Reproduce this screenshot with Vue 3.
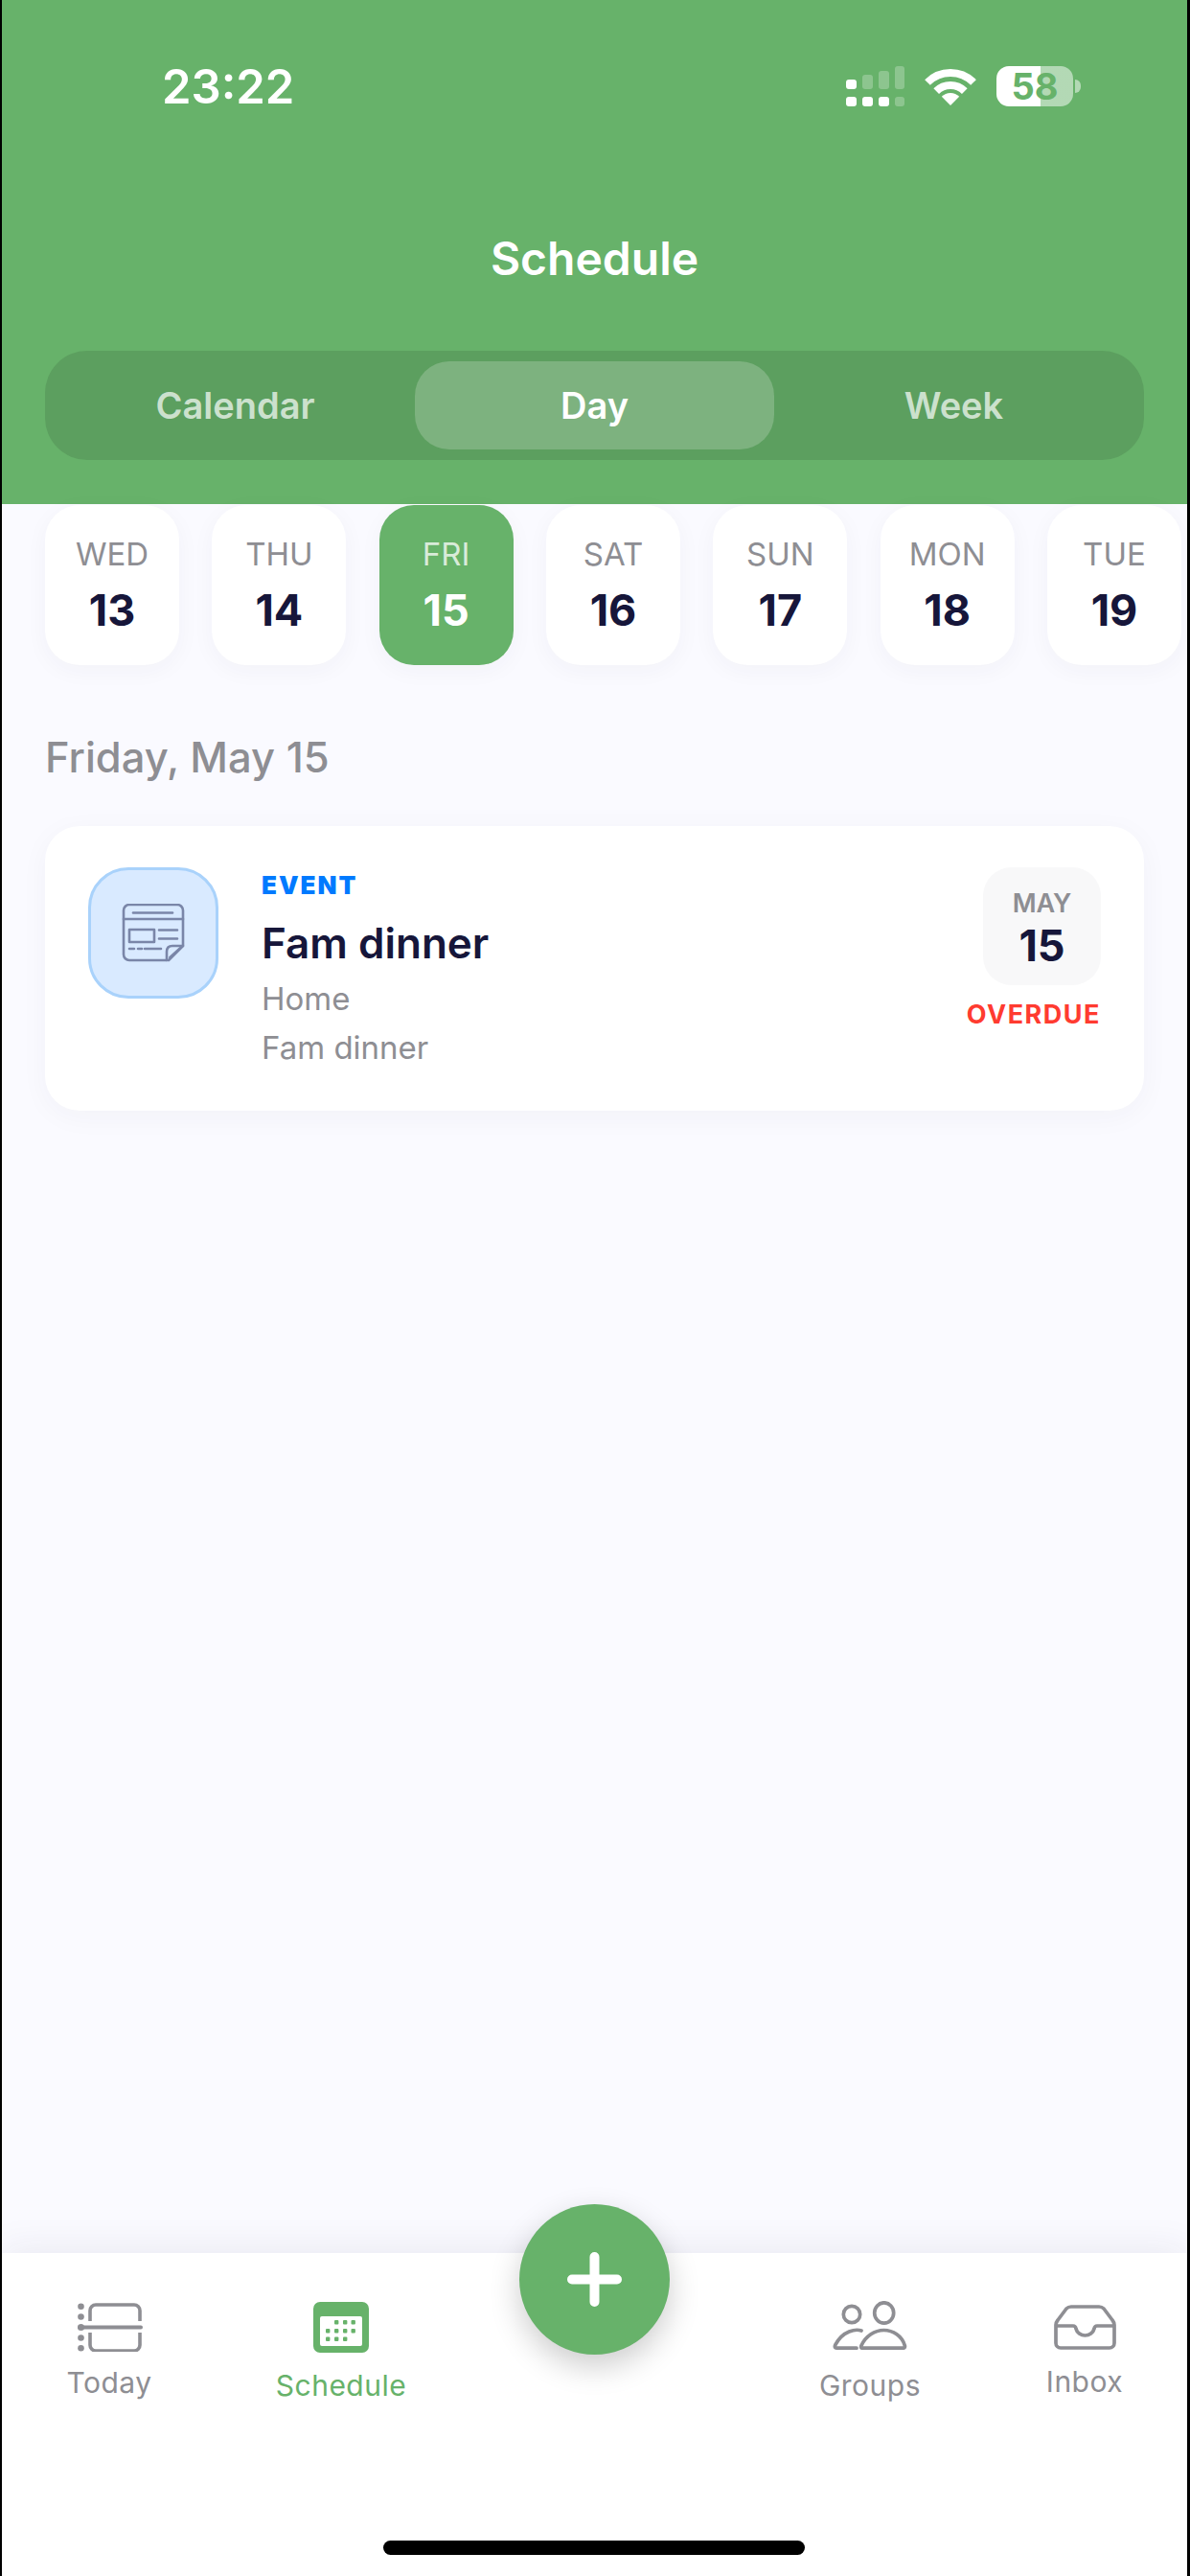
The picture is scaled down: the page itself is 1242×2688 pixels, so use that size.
<template>
  <div class="phone">
    <header class="header">
      <div class="status">
        <span class="time">23:22</span>
        <div class="status-icons">
          <svg class="signal" width="62" height="42" viewBox="0 0 62 42">
            <rect x="0" y="14" width="11" height="10" rx="3" fill="#fff" />
            <rect x="17" y="9" width="11" height="15" rx="3" fill="#fff" opacity=".25" />
            <rect x="34" y="5" width="11" height="19" rx="3" fill="#fff" opacity=".25" />
            <rect x="51" y="0" width="10" height="24" rx="3" fill="#fff" opacity=".25" />
            <rect x="0" y="32" width="11" height="10" rx="3" fill="#fff" />
            <rect x="17" y="32" width="11" height="10" rx="3" fill="#fff" />
            <rect x="34" y="32" width="11" height="10" rx="3" fill="#fff" />
            <rect x="51" y="32" width="10" height="10" rx="3" fill="#fff" opacity=".25" />
          </svg>
          <svg class="wifi" width="54" height="38" viewBox="0 0 54 38">
            <path d="M3 14A34 34 0 0 1 51 14" fill="none" stroke="#fff" stroke-width="8" />
            <path d="M12.2 23.2A21 21 0 0 1 41.8 23.2" fill="none" stroke="#fff" stroke-width="8" />
            <path d="M27 38L17.8 28.8A13 13 0 0 1 36.2 28.8Z" fill="#fff" />
          </svg>
          <div class="battery">
            <span>58</span>
            <i class="nub"></i>
          </div>
        </div>
      </div>
      <h1 class="title">Schedule</h1>
      <div class="segments">
        <div v-for="s in segments" :key="s" class="segment" :class="{ active: s === 'Day' }">{{ s }}</div>
      </div>
    </header>

    <main class="main">
      <div class="days">
        <div v-for="d in days" :key="d.num" class="day" :class="{ selected: d.num === 15 }">
          <span class="day-name">{{ d.name }}</span>
          <span class="day-num">{{ d.num }}</span>
        </div>
      </div>

      <h2 class="date-heading">Friday, May 15</h2>

      <div class="card">
        <div class="card-icon">
          <svg width="66" height="61" viewBox="0 0 66 61" fill="none" stroke="#7a86a8" stroke-width="2.6" stroke-linecap="round" stroke-linejoin="round">
            <path d="M47 59H8a6 6 0 0 1-6-6V7a6 6 0 0 1 6-6h50a6 6 0 0 1 6 6v37L49 59" />
            <path d="M47 59v-9q0-6 6-6h11" />
            <path d="M50 56l11-10" stroke-width="2" />
            <path d="M2 16h62" />
            <path d="M12 9.5h41" />
            <rect x="8" y="27" width="26" height="13" />
            <path d="M39 27.5h19M39 36.5h19" />
            <path d="M8 47h5M17 47h4M24 47h17" />
          </svg>
        </div>
        <div class="card-body">
          <span class="kind">EVENT</span>
          <span class="card-title">Fam dinner</span>
          <span class="card-line">Home</span>
          <span class="card-line">Fam dinner</span>
        </div>
        <div class="card-date">
          <div class="date-box">
            <span class="date-month">MAY</span>
            <span class="date-num">15</span>
          </div>
          <span class="overdue">OVERDUE</span>
        </div>
      </div>
    </main>

    <nav class="tabbar">
      <div class="tabs">
        <div class="tab today">
          <svg width="68" height="51" viewBox="0 0 68 51" fill="none" stroke="#8e8e93" stroke-width="3.6">
            <path d="M13 19V8a6 6 0 0 1 6-6h40a6 6 0 0 1 6 6v11" />
            <path d="M13 31v13a6 6 0 0 0 6 6h40a6 6 0 0 0 6-6V31" />
            <path d="M3 25.5h63" stroke-width="4" stroke-linecap="round" />
            <g fill="#8e8e93" stroke="none">
              <circle cx="3.5" cy="3.7" r="3.3" />
              <circle cx="3.5" cy="14.5" r="3.3" />
              <circle cx="3.5" cy="25.5" r="3.6" />
              <circle cx="3.5" cy="36.5" r="3.3" />
              <circle cx="3.5" cy="47.3" r="3.3" />
            </g>
          </svg>
          <span>Today</span>
        </div>
        <div class="tab schedule">
          <svg width="58" height="53" viewBox="0 0 58 53">
            <rect width="58" height="53" rx="7" fill="#67b26a" />
            <rect x="7" y="15" width="44" height="31" rx="2" fill="#fff" />
            <g fill="#67b26a">
              <rect v-for="p in calendarDots" :key="p[0] + '-' + p[1]" :x="p[0]" :y="p[1]" width="4.4" height="4.4" rx="1" />
            </g>
          </svg>
          <span>Schedule</span>
        </div>
        <div class="tab-gap"></div>
        <div class="tab groups">
          <svg width="78" height="51" viewBox="0 0 78 51" fill="none" stroke="#8e8e93" stroke-width="3.7" stroke-linecap="round" stroke-linejoin="round">
            <circle cx="20" cy="14" r="8.7" />
            <ellipse cx="53.7" cy="12.5" rx="10" ry="10.7" />
            <path d="M31 49.2h42.5q2.5 0 1.8-2.7C72.5 36.5 63 30.5 53.5 30.5S34.5 36.5 30 46.5Q29 49.2 31 49.2Z" />
            <path d="M30 31C24 29 11 31 3 45.5Q1 49.2 5 49.2H25" />
          </svg>
          <span>Groups</span>
        </div>
        <div class="tab inbox">
          <svg width="65" height="47" viewBox="0 0 65 47" fill="none" stroke="#8e8e93" stroke-width="3.7" stroke-linejoin="round">
            <path d="M18 2h29q3 0 5 2l9 12q2 2.5 2 5v19a5 5 0 0 1-5 5H7a5 5 0 0 1-5-5V21q0-2.5 2-5l9-12q2-2 5-2Z" />
            <path d="M2 22h18q2.5 0 3 3c1 4 5 7 9.5 7s8.500-3 9.500-7q.5-3 3-3h18" />
          </svg>
          <span>Inbox</span>
        </div>
      </div>
      <div class="home-indicator"></div>
      <button class="fab" aria-label="Add">
        <svg width="57" height="57" viewBox="0 0 57 57" stroke="#fff" stroke-width="10" stroke-linecap="round">
          <path d="M28.5 5v47M5 28.5h47" />
        </svg>
      </button>
    </nav>
  </div>
</template>

<script setup>
const segments = ['Calendar', 'Day', 'Week']

const days = [
  { name: 'WED', num: 13 },
  { name: 'THU', num: 14 },
  { name: 'FRI', num: 15 },
  { name: 'SAT', num: 16 },
  { name: 'SUN', num: 17 },
  { name: 'MON', num: 18 },
  { name: 'TUE', num: 19 },
]

const calendarDots = [
  [22, 19], [31, 19], [39.5, 19],
  [13, 28], [22, 28], [31, 28], [39.5, 28],
  [13, 36.5], [22, 36.5], [31, 36.5],
]
</script>

<style>
html,
body {
  margin: 0;
  background: #000;
}
</style>

<style scoped>
.phone {
  position: relative;
  width: 1237px;
  height: 2688px;
  margin-left: 2px;
  display: flex;
  flex-direction: column;
  background: #fafaff;
  font-family: Inter, "Liberation Sans", sans-serif;
  overflow: hidden;
}

.header {
  height: 526px;
  box-sizing: border-box;
  padding: 0 45px;
  background: #67b26a;
  color: #fff;
  flex-shrink: 0;
}

.status {
  height: 120px;
  display: flex;
  align-items: flex-start;
  justify-content: space-between;
}

.time {
  margin: 61px 0 0 122px;
  font-size: 49px;
  line-height: 60px;
  font-weight: 600;
}

.status-icons {
  display: flex;
  align-items: flex-start;
  margin: 69px 74px 0 0;
}

.signal {
  margin-right: 20px;
}

.wifi {
  margin: 3px 21px 0 0;
}

.battery {
  position: relative;
  width: 80px;
  height: 42px;
  border-radius: 13px;
  background: linear-gradient(90deg, #fff 57.5%, rgba(255, 255, 255, 0.5) 57.5%);
  color: #67b26a;
  font-size: 38px;
  line-height: 42px;
  font-weight: 700;
  text-align: center;
}

.nub {
  position: absolute;
  left: 82px;
  top: 14px;
  width: 6px;
  height: 14px;
  border-radius: 0 7px 7px 0;
  background: rgba(255, 255, 255, 0.5);
}

.title {
  margin: 0;
  padding-top: 120px;
  font-size: 48px;
  line-height: 60px;
  font-weight: 600;
  text-align: center;
}

.segments {
  margin-top: 66px;
  height: 114px;
  box-sizing: border-box;
  padding: 11px;
  display: grid;
  grid-template-columns: repeat(3, 1fr);
  border-radius: 44px;
  background: #5c9f5f;
}

.segment {
  display: flex;
  align-items: center;
  justify-content: center;
  border-radius: 36px;
  font-size: 38px;
  font-weight: 600;
  color: rgba(255, 255, 255, 0.7);
}

.segment.active {
  background: #7db27f;
  color: #fff;
}

.main {
  flex: 1;
  padding: 1px 0 0 45px;
}

.days {
  display: flex;
  justify-content: space-between;
  width: 1186px;
}

.day {
  width: 140px;
  height: 167px;
  border-radius: 36px;
  background: #fff;
  box-shadow: 0 6px 24px rgba(40, 40, 80, 0.04);
  display: flex;
  flex-direction: column;
  align-items: center;
  color: #16163a;
}

.day-name {
  margin-top: 31px;
  font-size: 33px;
  line-height: 40px;
  color: #8e8e93;
}

.day-num {
  margin-top: 12px;
  font-size: 45px;
  line-height: 54px;
  font-weight: 700;
}

.day.selected {
  background: #67b26a;
  color: #fff;
}

.day.selected .day-name {
  color: rgba(255, 255, 255, 0.75);
}

.date-heading {
  margin: 69px 0 0;
  font-size: 43.5px;
  line-height: 54px;
  font-weight: 500;
  color: #8e8e93;
}

.card {
  margin-top: 45px;
  width: 1147px;
  height: 297px;
  box-sizing: border-box;
  padding: 43px 45px 0;
  border-radius: 36px;
  background: #fff;
  box-shadow: 0 6px 30px rgba(40, 40, 80, 0.04);
  display: flex;
  align-items: flex-start;
}

.card-icon {
  width: 136px;
  height: 137px;
  box-sizing: border-box;
  border: 3px solid #a9d2fb;
  border-radius: 42px;
  background: #d9eaff;
  display: flex;
  align-items: center;
  justify-content: center;
  flex-shrink: 0;
}

.card-body {
  margin-left: 45px;
  flex: 1;
  display: flex;
  flex-direction: column;
}

.kind {
  margin-top: 4px;
  font-size: 26px;
  line-height: 30px;
  font-weight: 900;
  letter-spacing: 2px;
  color: #007aff;
}

.card-title {
  margin-top: 18px;
  font-size: 44px;
  line-height: 54px;
  font-weight: 600;
  color: #16163a;
}

.card-line {
  font-size: 33px;
  line-height: 51px;
  color: #8e8e93;
}

.card-title + .card-line {
  margin-top: 6px;
}

.card-date {
  display: flex;
  flex-direction: column;
  align-items: flex-end;
}

.date-box {
  width: 123px;
  height: 123px;
  border-radius: 30px;
  background: #f8f8f9;
  display: flex;
  flex-direction: column;
  align-items: center;
}

.date-month {
  margin-top: 22px;
  font-size: 27px;
  line-height: 32px;
  font-weight: 600;
  color: #8e8e93;
}

.date-num {
  margin-top: 3px;
  font-size: 45px;
  line-height: 50px;
  font-weight: 700;
  color: #16163a;
}

.overdue {
  margin-top: 15px;
  font-size: 27px;
  line-height: 32px;
  font-weight: 700;
  letter-spacing: 1.5px;
  color: #ff3b30;
}

.tabbar {
  position: relative;
  height: 337px;
  flex-shrink: 0;
  background: #fff;
  box-shadow: 0 -4px 36px rgba(40, 40, 80, 0.08);
}

.tabs {
  display: grid;
  grid-template-columns: 226px 256px 1fr 300px 148px;
  padding-right: 33px;
}

.tab {
  display: flex;
  flex-direction: column;
  align-items: center;
  font-size: 30px;
  line-height: 36px;
  letter-spacing: 0.5px;
  color: #8e8e93;
}

.tab svg,
.tab span {
  display: block;
}

.today {
  padding-top: 52px;
}

.today span {
  margin: 14px 2px 0 0;
}

.schedule {
  padding-top: 51px;
  color: #67b26a;
}

.schedule span {
  margin-top: 16px;
}

.groups {
  padding-top: 50px;
}

.groups span {
  margin-top: 19px;
}

.inbox {
  padding-top: 54px;
}

.inbox span {
  margin-top: 15px;
}

.home-indicator {
  position: absolute;
  left: 398px;
  bottom: 22px;
  width: 440px;
  height: 15px;
  border-radius: 8px;
  background: #000;
}

.fab {
  position: absolute;
  left: 540px;
  top: -51px;
  width: 157px;
  height: 157px;
  padding: 0;
  border: 0;
  border-radius: 50%;
  background: #67b26a;
  box-shadow: 0 12px 32px rgba(0, 0, 0, 0.2);
  display: flex;
  align-items: center;
  justify-content: center;
}
</style>
